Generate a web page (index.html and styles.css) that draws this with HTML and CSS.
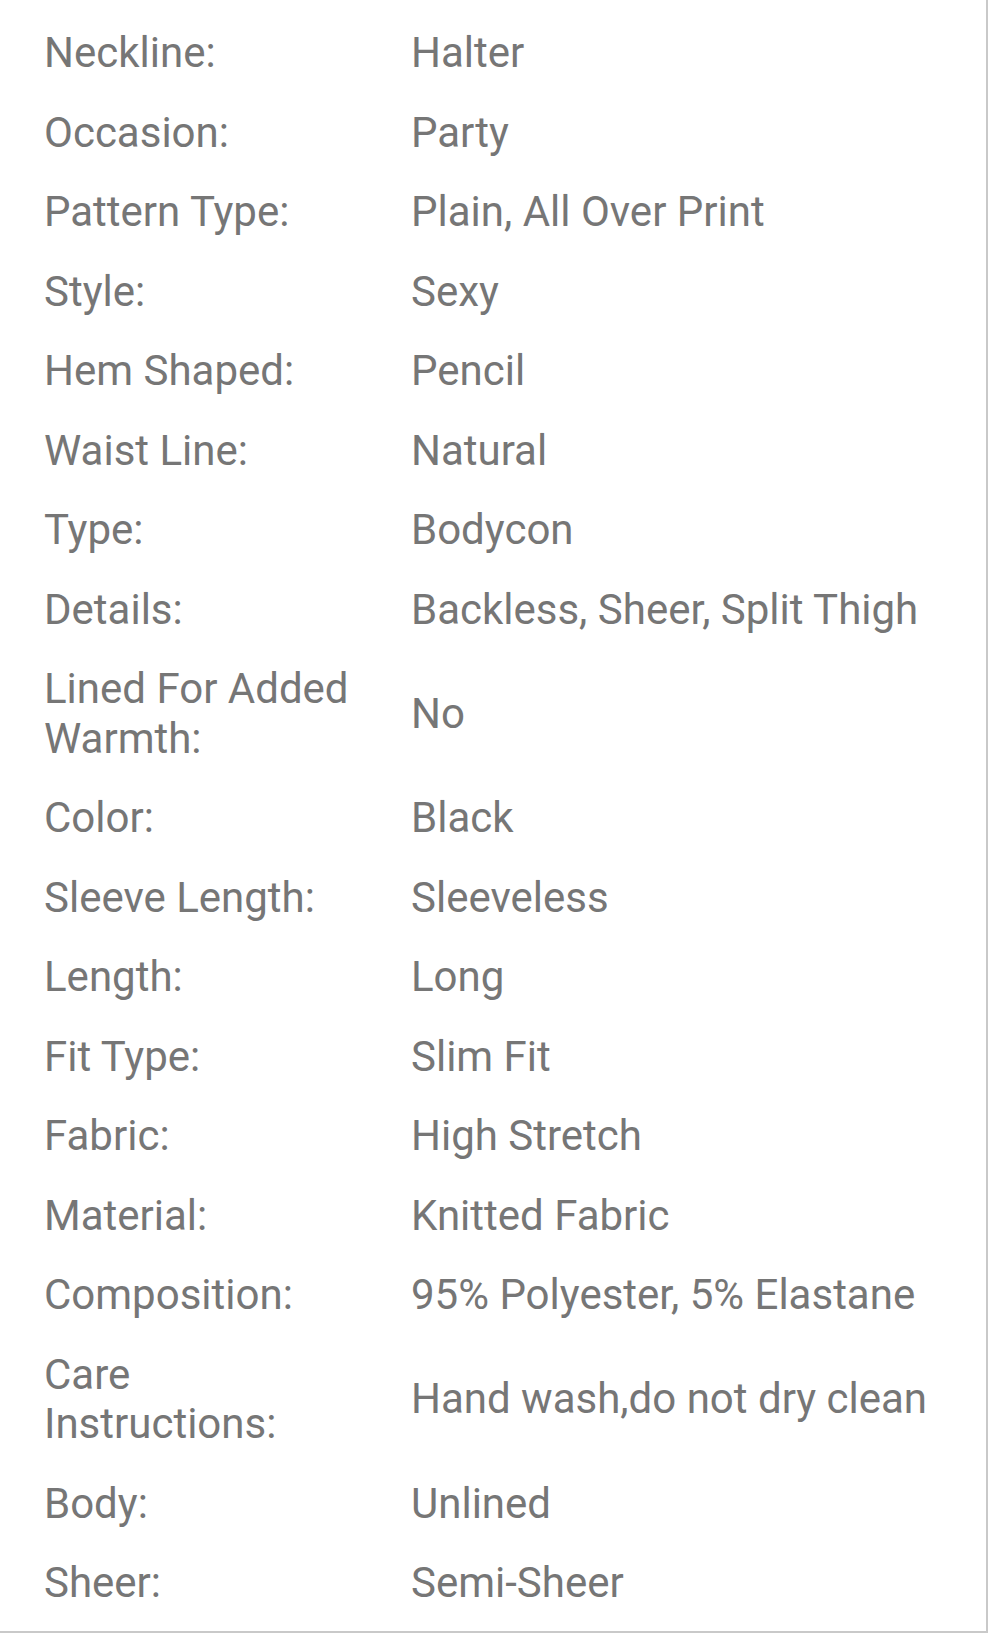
FILE: index.html
```html
<!DOCTYPE html>
<html>
<head>
<meta charset="utf-8">
<link rel="stylesheet" href="styles.css">
</head>
<body>
<div class="sheet">
  <div class="specs">
    <div class="label">Neckline:</div><div class="value">Halter</div>
    <div class="label">Occasion:</div><div class="value">Party</div>
    <div class="label">Pattern Type:</div><div class="value">Plain, All Over Print</div>
    <div class="label">Style:</div><div class="value">Sexy</div>
    <div class="label">Hem Shaped:</div><div class="value">Pencil</div>
    <div class="label">Waist Line:</div><div class="value">Natural</div>
    <div class="label">Type:</div><div class="value">Bodycon</div>
    <div class="label">Details:</div><div class="value">Backless, Sheer, Split Thigh</div>
    <div class="label">Lined For Added Warmth:</div><div class="value">No</div>
    <div class="label">Color:</div><div class="value">Black</div>
    <div class="label">Sleeve Length:</div><div class="value">Sleeveless</div>
    <div class="label">Length:</div><div class="value">Long</div>
    <div class="label">Fit Type:</div><div class="value">Slim Fit</div>
    <div class="label">Fabric:</div><div class="value">High Stretch</div>
    <div class="label">Material:</div><div class="value">Knitted Fabric</div>
    <div class="label">Composition:</div><div class="value">95% Polyester, 5% Elastane</div>
    <div class="label">Care Instructions:</div><div class="value">Hand wash,do not dry clean</div>
    <div class="label">Body:</div><div class="value">Unlined</div>
    <div class="label">Sheer:</div><div class="value">Semi-Sheer</div>
  </div>
</div>
</body>
</html>
```

FILE: styles.css
```css
html, body {
  margin: 0;
  padding: 0;
  background: #ffffff;
}

.sheet {
  box-sizing: border-box;
  width: 988px;
  height: 1633px;
  border-right: 2px solid #c9c9c9;
  border-bottom: 2px solid #c9c9c9;
  padding: 13px 0 0 44px;
  background: #ffffff;
}

.specs {
  display: grid;
  grid-template-columns: 367px 1fr;
  font-family: Roboto, "Noto Sans", "Liberation Sans", sans-serif;
  font-size: 42px;
  line-height: 49.5px;
  color: #767676;
}

.label {
  padding: 15px 40px 15px 0;
  display: flex;
  align-items: center;
}

.value {
  padding: 15px 0;
  display: flex;
  align-items: center;
  white-space: nowrap;
}
```
